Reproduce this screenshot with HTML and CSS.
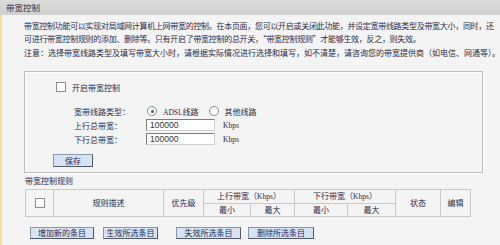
FILE: index.html
```html
<!DOCTYPE html>
<html>
<head>
<meta charset="utf-8">
<link rel="stylesheet" href="styles.css">
</head>
<body>
<div class="hdr">带宽控制</div>
<div class="main">
  <p class="desc">带宽控制功能可以实现对局域网计算机上网带宽的控制。在本页面，您可以开启或关闭此功能，并设定宽带线路类型及带宽大小，同时，还<br>可进行带宽控制规则的添加、删除等。只有开启了带宽控制的总开关，“带宽控制规则”才能够生效，反之，则失效。</p>
  <p class="note">注意：选择带宽线路类型及填写带宽大小时，请根据实际情况进行选择和填写，如不清楚，请咨询您的带宽提供商（如电信、网通等）。</p>
  <div class="panel">
    <div class="enable"><span class="cb"></span><span>开启带宽控制</span></div>
    <div class="form">
      <span class="lbl">宽带线路类型：</span>
      <span class="radios"><span class="radio on"></span><span class="rtxt"><span class="lat">ADSL</span>线路</span><span class="radio"></span><span class="rtxt">其他线路</span></span>
      <span class="lbl">上行总带宽：</span>
      <span class="field"><span class="input">100000</span><span class="unit">Kbps</span></span>
      <span class="lbl">下行总带宽：</span>
      <span class="field"><span class="input">100000</span><span class="unit">Kbps</span></span>
    </div>
    <div class="save"><span class="btn btn-save">保存</span></div>
  </div>
  <div class="rtitle">带宽控制规则</div>
  <table class="rules">
    <colgroup>
      <col class="c1"><col class="c2"><col class="c3"><col class="c4"><col class="c5"><col class="c6"><col class="c7"><col class="c8"><col class="c9">
    </colgroup>
    <tr class="r1">
      <td rowspan="2"><span class="cb"></span></td>
      <td rowspan="2">规则描述</td>
      <td rowspan="2">优先级</td>
      <td colspan="2">上行带宽（<span class="lat">Kbps</span>）</td>
      <td colspan="2">下行带宽（<span class="lat">Kbps</span>）</td>
      <td rowspan="2">状态</td>
      <td rowspan="2">编辑</td>
    </tr>
    <tr class="r2">
      <td>最小</td><td>最大</td><td>最小</td><td>最大</td>
    </tr>
  </table>
  <div class="btns">
    <span class="btn b1">增加新的条目</span>
    <span class="btn b2">生效所选条目</span>
    <span class="btn b3">失效所选条目</span>
    <span class="btn b4">删除所选条目</span>
  </div>
</div>
</body>
</html>
```

FILE: styles.css
```css
html, body {
  margin: 0;
  padding: 0;
  background: #f4f4f4;
  font-family: "Noto Sans CJK SC", "Noto Sans", sans-serif;
  font-size: 8px;
  color: #2a2a48;
  overflow: hidden;
}
.hdr {
  height: 15px;
  line-height: 15px;
  padding-left: 6px;
  background: linear-gradient(#dcdcdc, #cfcfcf);
  color: #333;
  font-size: 8.5px;
}
.main {
  border-left: 2px solid #f2dfa6;
  padding: 5px 0 0 22px;
  height: 225px;
}
.desc {
  margin: 0;
  line-height: 12.5px;
  white-space: nowrap;
  letter-spacing: -0.3px;
}
.note {
  margin: 2px 0 0 0;
  line-height: 12px;
}
.panel {
  margin-top: 12px;
  width: 457px;
  height: 100px;
  border: 1px solid #bdbdbd;
  box-shadow: inset 1px 1px 0 #fff, 1px 1px 0 #fff;
  box-sizing: content-box;
}
.enable {
  display: flex;
  align-items: center;
  gap: 6px;
  margin: 10px 0 0 31px;
  height: 10px;
}
.cb {
  display: inline-block;
  width: 8px;
  height: 8px;
  border: 1px solid #8c8c8c;
  background: #fff;
}
.form {
  display: grid;
  grid-template-columns: 72px auto;
  grid-auto-rows: 14px;
  align-items: center;
  margin: 12px 0 0 49px;
}
.lbl { white-space: nowrap; }
.radios {
  display: flex;
  align-items: center;
}
.radio {
  width: 8px;
  height: 8px;
  border-radius: 50%;
  border: 1px solid #8a8a8a;
  background: #fff;
  position: relative;
  margin-left: 1px;
}
.radio.on::after {
  content: "";
  position: absolute;
  left: 2.5px;
  top: 2.5px;
  width: 3px;
  height: 3px;
  border-radius: 50%;
  background: #2b7a2b;
}
.rtxt { margin: 0 9px 0 6px; }
.lat { font-family: "Liberation Serif", serif; font-size: 7.5px; }
.field {
  display: flex;
  align-items: center;
}
.input {
  width: 64px;
  height: 10px;
  line-height: 10px;
  padding-left: 3px;
  border: 1px solid #7d7d7d;
  border-right-color: #cfcfcf;
  border-bottom-color: #cfcfcf;
  background: #fff;
  color: #333;
  font-family: "Liberation Sans", sans-serif;
  font-size: 8.5px;
}
.unit {
  margin-left: 8px;
  font-family: "Liberation Serif", serif;
  font-size: 7.5px;
}
.save { margin: 8px 0 0 28px; }
.btn {
  display: inline-block;
  box-sizing: border-box;
  height: 12px;
  line-height: 10px;
  text-align: center;
  background: #d6e3f3;
  border: 1px solid #8a97aa;
  border-right-color: #50596a;
  border-bottom-color: #50596a;
  color: #2a2a55;
  font-size: 8px;
}
.btn-save { width: 40px; height: 13px; line-height: 11px; }
.rtitle {
  margin: 3px 0 0 1px;
  line-height: 10px;
}
.rules {
  margin: 3px 0 0 1px;
  border-collapse: collapse;
  width: 445px;
  table-layout: fixed;
}
.rules td {
  border: 1px solid #c9c9c9;
  text-align: center;
  padding: 0;
  line-height: 10px;
}
.rules .r1 td { height: 13px; }
.rules .r2 td { height: 12px; }
.rules .cb { vertical-align: middle; }
.c1 { width: 28px; }
.c2 { width: 110px; }
.c3 { width: 40px; }
.c4 { width: 47px; }
.c5 { width: 44px; }
.c6 { width: 53px; }
.c7 { width: 48px; }
.c8 { width: 45px; }
.c9 { width: 30px; }
.btns {
  display: flex;
  margin: 10px 0 0 6px;
}
.b1 { width: 64px; }
.b2 { width: 55px; margin-left: 9px; }
.b3 { width: 65px; margin-left: 18px; }
.b4 { width: 66px; margin-left: 7px; }
```
